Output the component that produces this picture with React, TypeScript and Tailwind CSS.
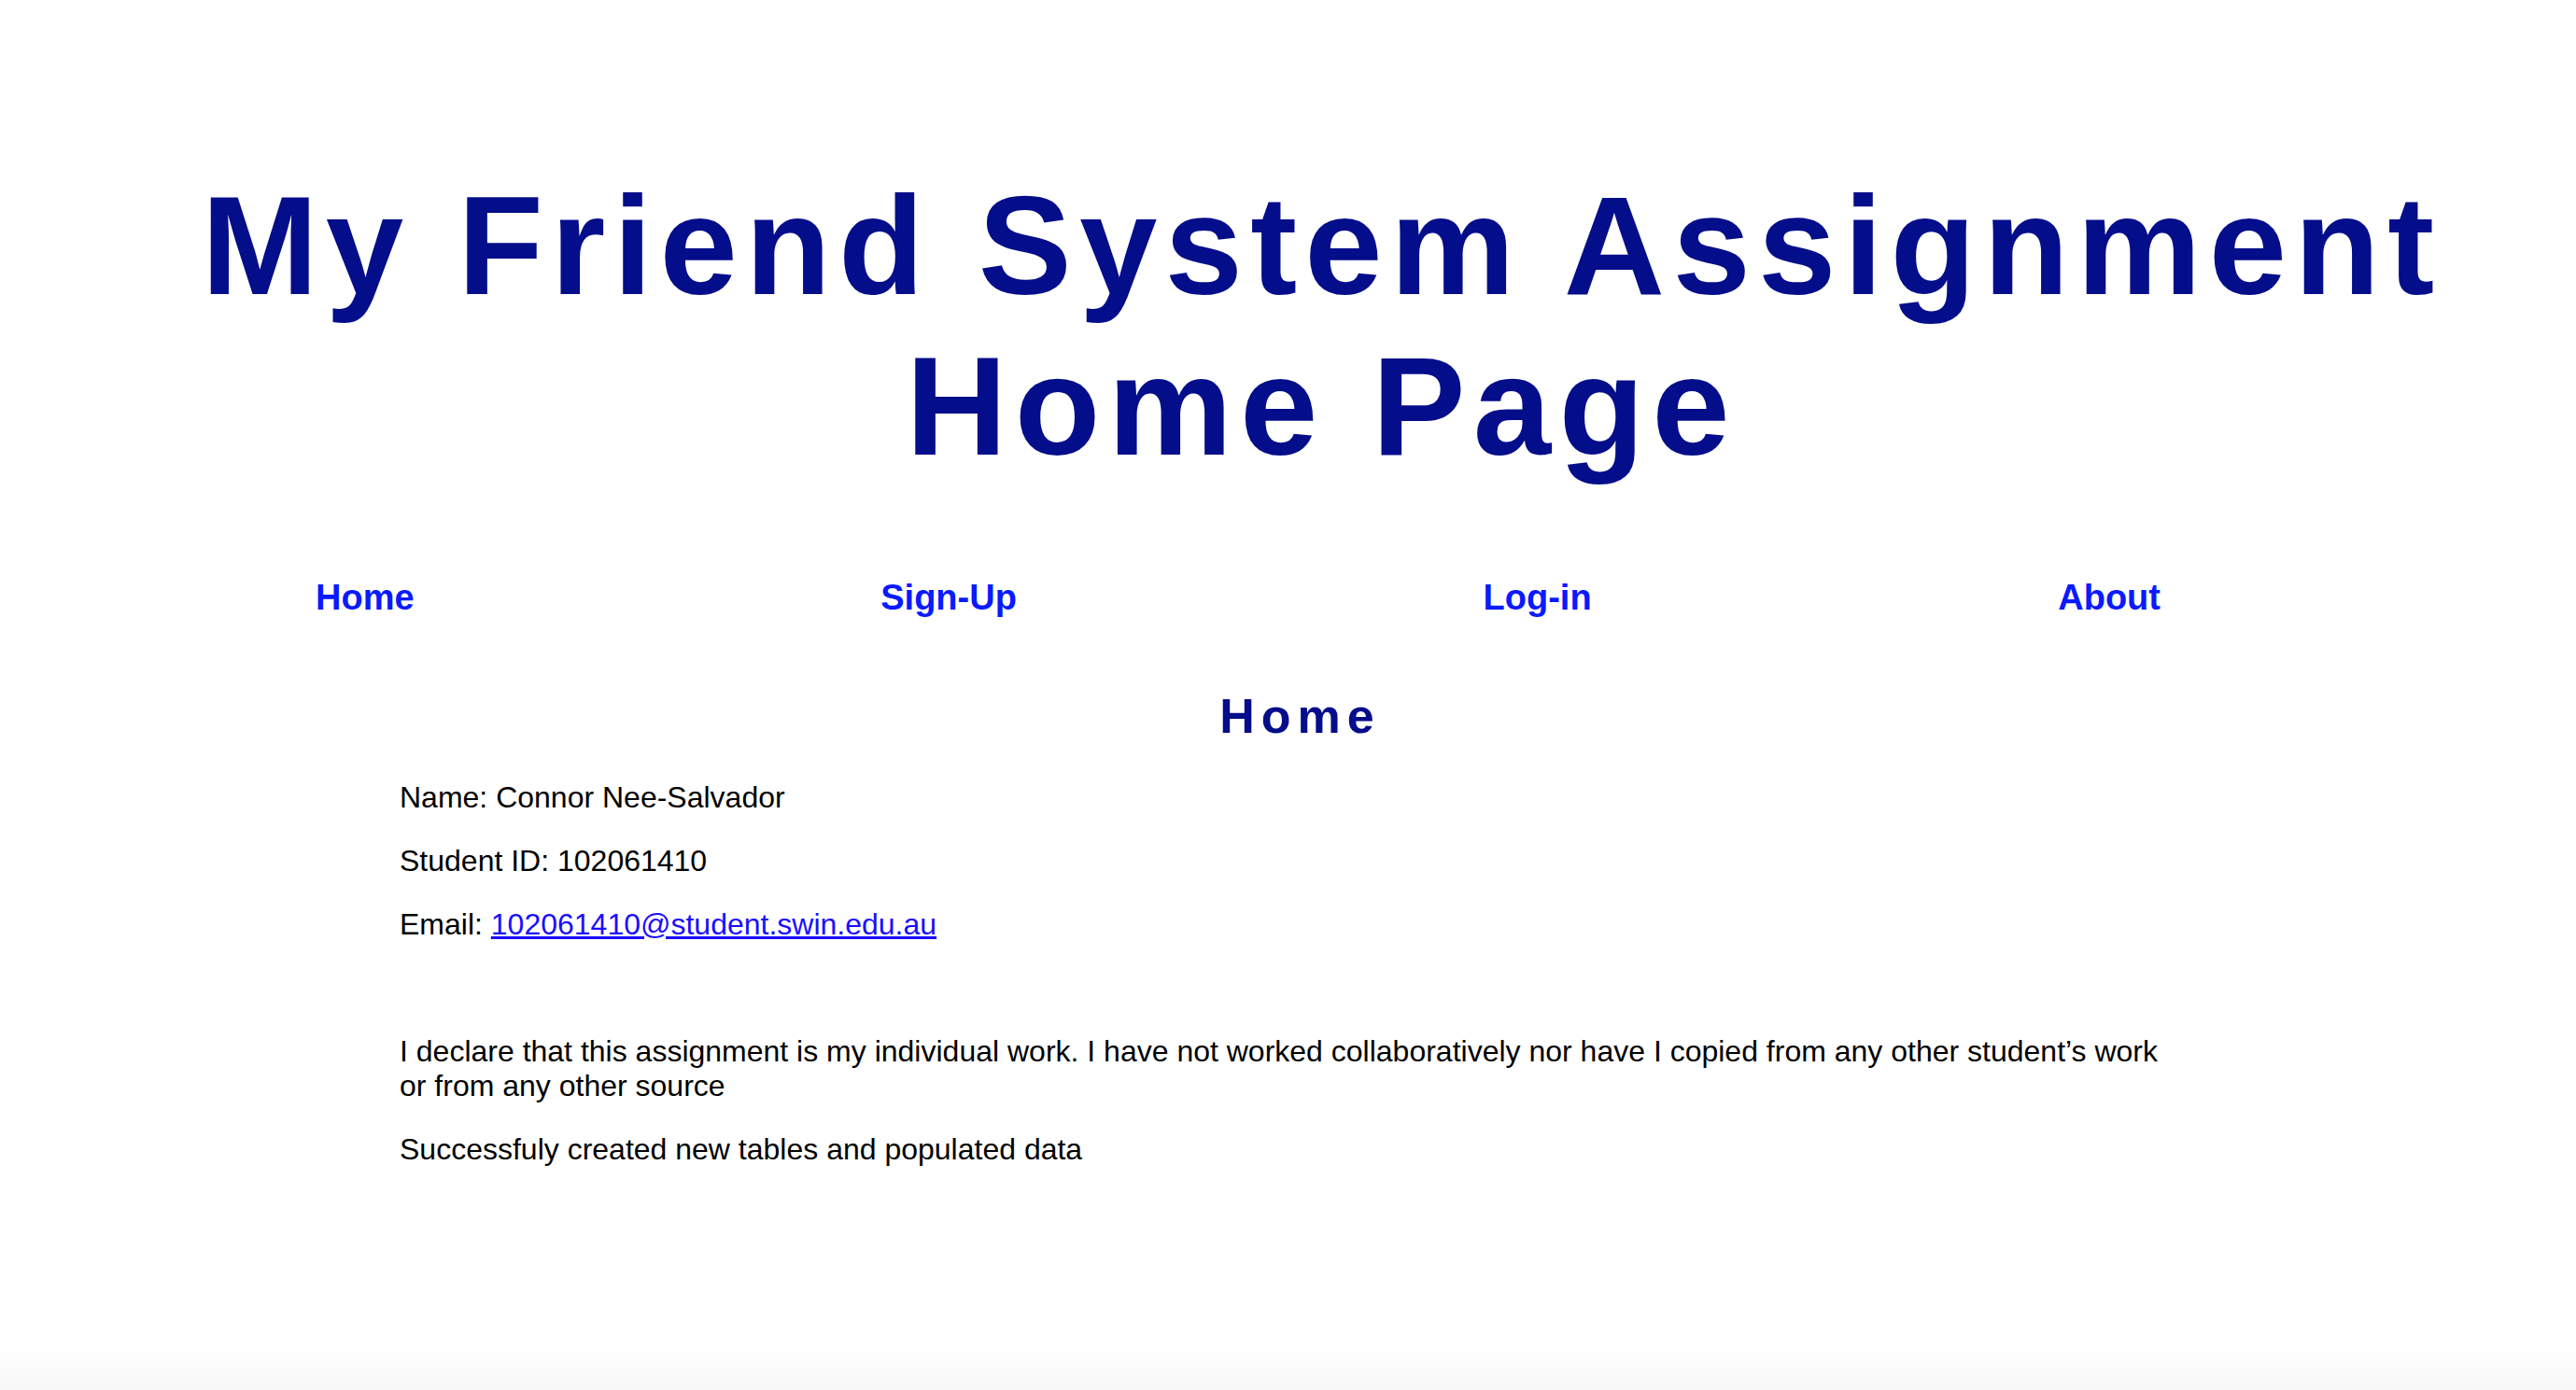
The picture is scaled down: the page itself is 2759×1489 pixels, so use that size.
import React from 'react';

const navItems = ['Home', 'Sign-Up', 'Log-in', 'About'];

export default function App() {
  return (
    <div className="flex h-[1489px] flex-col bg-white font-['Liberation_Sans',Arial,sans-serif] text-black">
      <h1 className="mt-[177px] pl-[72px] text-center text-[150px] font-bold leading-[172px] tracking-[8.2px] text-[#040d8a]">
        My Friend System Assignment
        <br />
        Home Page
      </h1>

      <nav className="mt-[97px] flex justify-between pl-[338px] pr-[445px]">
        {navItems.map((item) => (
          <a key={item} className="text-[38px] font-bold leading-[44px] text-[#0a1aff]">
            {item}
          </a>
        ))}
      </nav>

      <h2 className="mt-[75px] pl-[26px] text-center text-[52px] font-bold leading-[60px] tracking-[7px] text-[#040d8a]">
        Home
      </h2>

      <div className="ml-[428px] mr-[424px] mt-[39px] flex flex-col gap-[31px] text-[32px] leading-[37px]">
        <p>Name: Connor Nee-Salvador</p>
        <p>Student ID: 102061410</p>
        <p>
          Email:{' '}
          <a href="#" className="text-[#1a0dff] underline">
            102061410@student.swin.edu.au
          </a>
        </p>
        <p>&nbsp;</p>
        <p>
          I declare that this assignment is my individual work. I have not worked collaboratively nor have I copied
          from any other student’s work or from any other source
        </p>
        <p>Successfuly created new tables and populated data</p>
      </div>

      <div className="flex-1" />
      <div className="h-[50px] bg-gradient-to-b from-white to-[#f7f7f7]" />
    </div>
  );
}
